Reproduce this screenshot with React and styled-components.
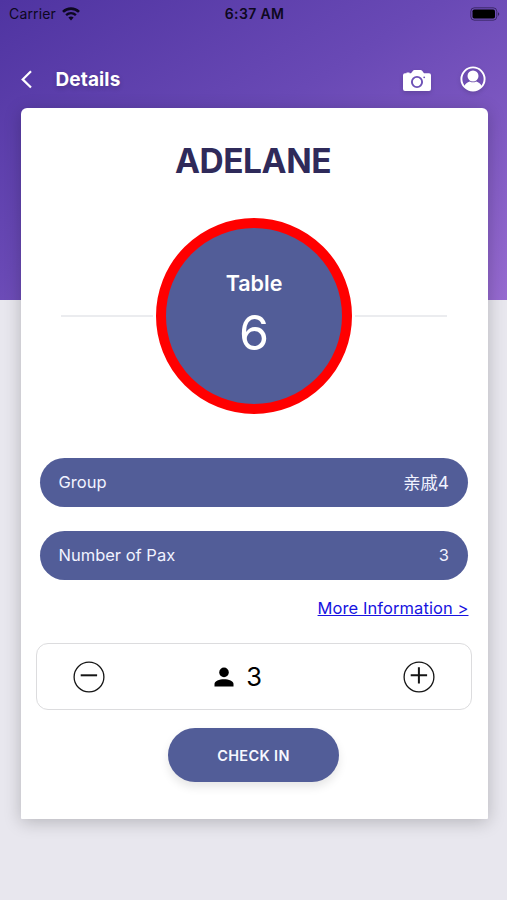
import React, { useState } from "react";
import styled, { createGlobalStyle } from "styled-components";

const GlobalStyle = createGlobalStyle`
  html, body {
    margin: 0;
    padding: 0;
    width: 100%;
    background: #e8e7ee;
  }
  *, *::before, *::after {
    box-sizing: border-box;
  }
`;

const Page = styled.div`
  height: 900px;
  overflow: hidden;
  font-family: Inter, "Noto Sans CJK SC", sans-serif;
  background: linear-gradient(148deg, #4f34a1 0%, #6949b5 45%, #966ad0 100%) 0 0 /
    100% 300px no-repeat #e8e7ee;
`;

const StatusBar = styled.div`
  display: grid;
  grid-template-columns: 1fr auto 1fr;
  align-items: center;
  height: 27px;
  padding: 0 7px 0 9px;
  font-size: 14px;
  color: #0d0820;
`;

const Carrier = styled.div`
  display: flex;
  align-items: center;
  gap: 6px;
  letter-spacing: 0.15px;
`;

const Clock = styled.div`
  font-weight: 600;
  letter-spacing: 0.35px;
`;

const BatteryIcon = styled.svg`
  justify-self: end;
`;

const NavBar = styled.div`
  display: flex;
  align-items: center;
  height: 81px;
  padding: 23px 21px 0 20px;
  color: white;
`;

const NavTitle = styled.div`
  flex: 1;
  margin-left: 21.5px;
  font-size: 19px;
  font-weight: 700;
  letter-spacing: 0.12px;
  text-shadow: 0 2px 5px rgba(0, 0, 0, 0.2);
`;

const NavIcons = styled.div`
  display: flex;
  align-items: center;
  gap: 29px;
  filter: drop-shadow(0 2px 2px rgba(0, 0, 0, 0.15));
`;

const Card = styled.div`
  display: flex;
  flex-direction: column;
  align-items: center;
  height: 711px;
  margin: 0 19.5px 0 20.5px;
  background-color: white;
  border-radius: 6px 6px 1px 1px;
  box-shadow: 0 3px 17px rgba(0, 0, 0, 0.22);
`;

const GuestName = styled.h1`
  margin: 32px 0 0;
  padding-right: 2px;
  font-size: 33.5px;
  line-height: 42px;
  font-weight: 700;
  letter-spacing: -0.45px;
  color: #2f2a5a;
`;

const TableRow = styled.div`
  display: flex;
  align-items: center;
  gap: 3px;
  width: 386px;
  margin-top: 36px;
`;

const Line = styled.div`
  flex: 1;
  height: 2px;
  background-color: #ebecef;
`;

const TableCircle = styled.div`
  display: flex;
  flex-direction: column;
  align-items: center;
  width: 196px;
  height: 196px;
  padding-top: 41px;
  border: 10px solid #ff0000;
  border-radius: 50%;
  background-color: #525d98;
  color: white;
`;

const TableLabel = styled.div`
  font-size: 21.5px;
  line-height: 28px;
  font-weight: 600;
`;

const TableNumber = styled.div`
  margin-top: 6px;
  font-size: 48.5px;
  line-height: 60px;
  font-weight: 400;
`;

const InfoList = styled.div`
  display: flex;
  flex-direction: column;
  gap: 24px;
  width: 428px;
  margin-top: 44px;
`;

const InfoRow = styled.div`
  display: flex;
  align-items: center;
  justify-content: space-between;
  height: 49px;
  padding: 0 19px 2px 18.5px;
  border-radius: 25px;
  background-color: #525d98;
  color: #f1f3ff;
  font-size: 16.5px;
`;

const GroupName = styled.span`
  font-size: 17.3px;
`;

const MoreLink = styled.a`
  align-self: flex-end;
  margin: 17px 19px 0 0;
  font-size: 16.5px;
  line-height: 22px;
  letter-spacing: 0.08px;
  color: #1713e0;
  text-decoration: underline;
`;

const Counter = styled.div`
  display: flex;
  align-items: center;
  justify-content: space-between;
  width: 436px;
  height: 67px;
  margin-top: 24px;
  padding: 0 36px;
  border: 1.5px solid #dcdcde;
  border-radius: 12px;
`;

const CounterButton = styled.button`
  display: flex;
  padding: 0;
  border: none;
  background: none;
  cursor: pointer;
`;

const CounterValue = styled.div`
  display: flex;
  align-items: center;
  gap: 12.5px;
  margin-right: 32px;
  font-size: 25.5px;
  color: black;
`;

const CheckInButton = styled.button`
  width: 171px;
  height: 54px;
  margin: 18px 1px 0 0;
  padding: 0;
  border: none;
  border-radius: 27px;
  background-color: #525d98;
  box-shadow: 0 5px 10px rgba(0, 0, 0, 0.1);
  color: #f7f8ff;
  font-family: inherit;
  font-size: 14.5px;
  font-weight: 600;
  letter-spacing: 0.35px;
  cursor: pointer;
`;

const WifiIcon = () => (
  <svg width="18" height="14" viewBox="0 0 18 14" fill="none">
    <path d="M1 4.9C5.4.5 12.6.5 17 4.9" stroke="currentColor" strokeWidth="2.6" />
    <path d="M4.1 8.2C7 5.5 11 5.5 13.9 8.2" stroke="currentColor" strokeWidth="2.4" />
    <path d="M6.4 10.6C7.9 9.2 10.1 9.2 11.6 10.6L9 13.4Z" fill="currentColor" />
  </svg>
);

const Battery = () => (
  <BatteryIcon width="30" height="14" viewBox="0 0 30 14">
    <rect x="0.8" y="0.8" width="26" height="12.4" rx="3.6" fill="none" stroke="#0d0820" strokeOpacity="0.5" />
    <rect x="2.5" y="2.5" width="22.5" height="9" rx="1.8" fill="#000" />
    <path d="M28 5.2c1.7.5 1.7 3.1 0 3.6z" fill="#0d0820" fillOpacity="0.6" />
  </BatteryIcon>
);

const BackIcon = () => (
  <svg width="14" height="20" viewBox="0 0 14 20" fill="none">
    <path d="M11 2.3L2.7 10.4L11 18.5" stroke="white" strokeWidth="2.2" />
  </svg>
);

const CameraIcon = () => (
  <svg width="28" height="26" viewBox="0 -4 28 26">
    <path
      d="M2 3.2h1.5v-.8h3v.8H8L10 .7Q10.5 0 11.4 0h6.2q.9 0 1.5.7L21 3.2h5q2 0 2 2V19q0 2-2 2H2q-2 0-2-2V5.2q0-2 2-2z"
      fill="white"
    />
    <circle cx="14" cy="12" r="5.1" fill="none" stroke="#6d51b6" strokeWidth="1.9" />
    <circle cx="21.2" cy="7.3" r="0.9" fill="#6d51b6" />
  </svg>
);

const ProfileIcon = () => (
  <svg width="26" height="26" viewBox="0 0 26 26">
    <circle cx="13" cy="13" r="11.6" fill="none" stroke="white" strokeWidth="1.9" />
    <circle cx="13" cy="10" r="5.5" fill="white" />
    <path
      d="M4.2 20.2C5.4 17.5 7.2 16.3 9.8 15.4Q13 17.2 16.2 15.4C18.8 16.3 20.6 17.5 21.8 20.2Q18.5 24.5 13 24.5T4.2 20.2z"
      fill="white"
    />
  </svg>
);

const PersonIcon = () => (
  <svg width="20" height="20" viewBox="0 0 20 20">
    <circle cx="10" cy="5.4" r="4.8" fill="black" />
    <path d="M.5 19.5V17C.5 14 5.2 12.2 10 12.2S19.5 14 19.5 17v2.5z" fill="black" />
  </svg>
);

const CircleIcon = ({ plus }) => (
  <svg width="32" height="32" viewBox="0 0 32 32" fill="none" stroke="#151515">
    <circle cx="16" cy="16" r="14.9" strokeWidth="1.3" />
    <path d={plus ? "M7.7 14.3H24.1M15.9 6.3V22.4" : "M7.7 14.3H24.1"} strokeWidth="2" />
  </svg>
);

export default function App() {
  const [pax, setPax] = useState(3);

  return (
    <>
      <GlobalStyle />
      <Page>
        <StatusBar>
          <Carrier>
            Carrier
            <WifiIcon />
          </Carrier>
          <Clock>6:37 AM</Clock>
          <Battery />
        </StatusBar>
        <NavBar>
          <BackIcon />
          <NavTitle>Details</NavTitle>
          <NavIcons>
            <CameraIcon />
            <ProfileIcon />
          </NavIcons>
        </NavBar>
        <Card>
          <GuestName>ADELANE</GuestName>
          <TableRow>
            <Line />
            <TableCircle>
              <TableLabel>Table</TableLabel>
              <TableNumber>6</TableNumber>
            </TableCircle>
            <Line />
          </TableRow>
          <InfoList>
            <InfoRow>
              <span>Group</span>
              <GroupName>亲戚4</GroupName>
            </InfoRow>
            <InfoRow>
              <span>Number of Pax</span>
              <span>3</span>
            </InfoRow>
          </InfoList>
          <MoreLink href="#">More Information &gt;</MoreLink>
          <Counter>
            <CounterButton onClick={() => setPax(Math.max(0, pax - 1))}>
              <CircleIcon />
            </CounterButton>
            <CounterValue>
              <PersonIcon />
              <span>{pax}</span>
            </CounterValue>
            <CounterButton onClick={() => setPax(pax + 1)}>
              <CircleIcon plus />
            </CounterButton>
          </Counter>
          <CheckInButton>CHECK IN</CheckInButton>
        </Card>
      </Page>
    </>
  );
}
